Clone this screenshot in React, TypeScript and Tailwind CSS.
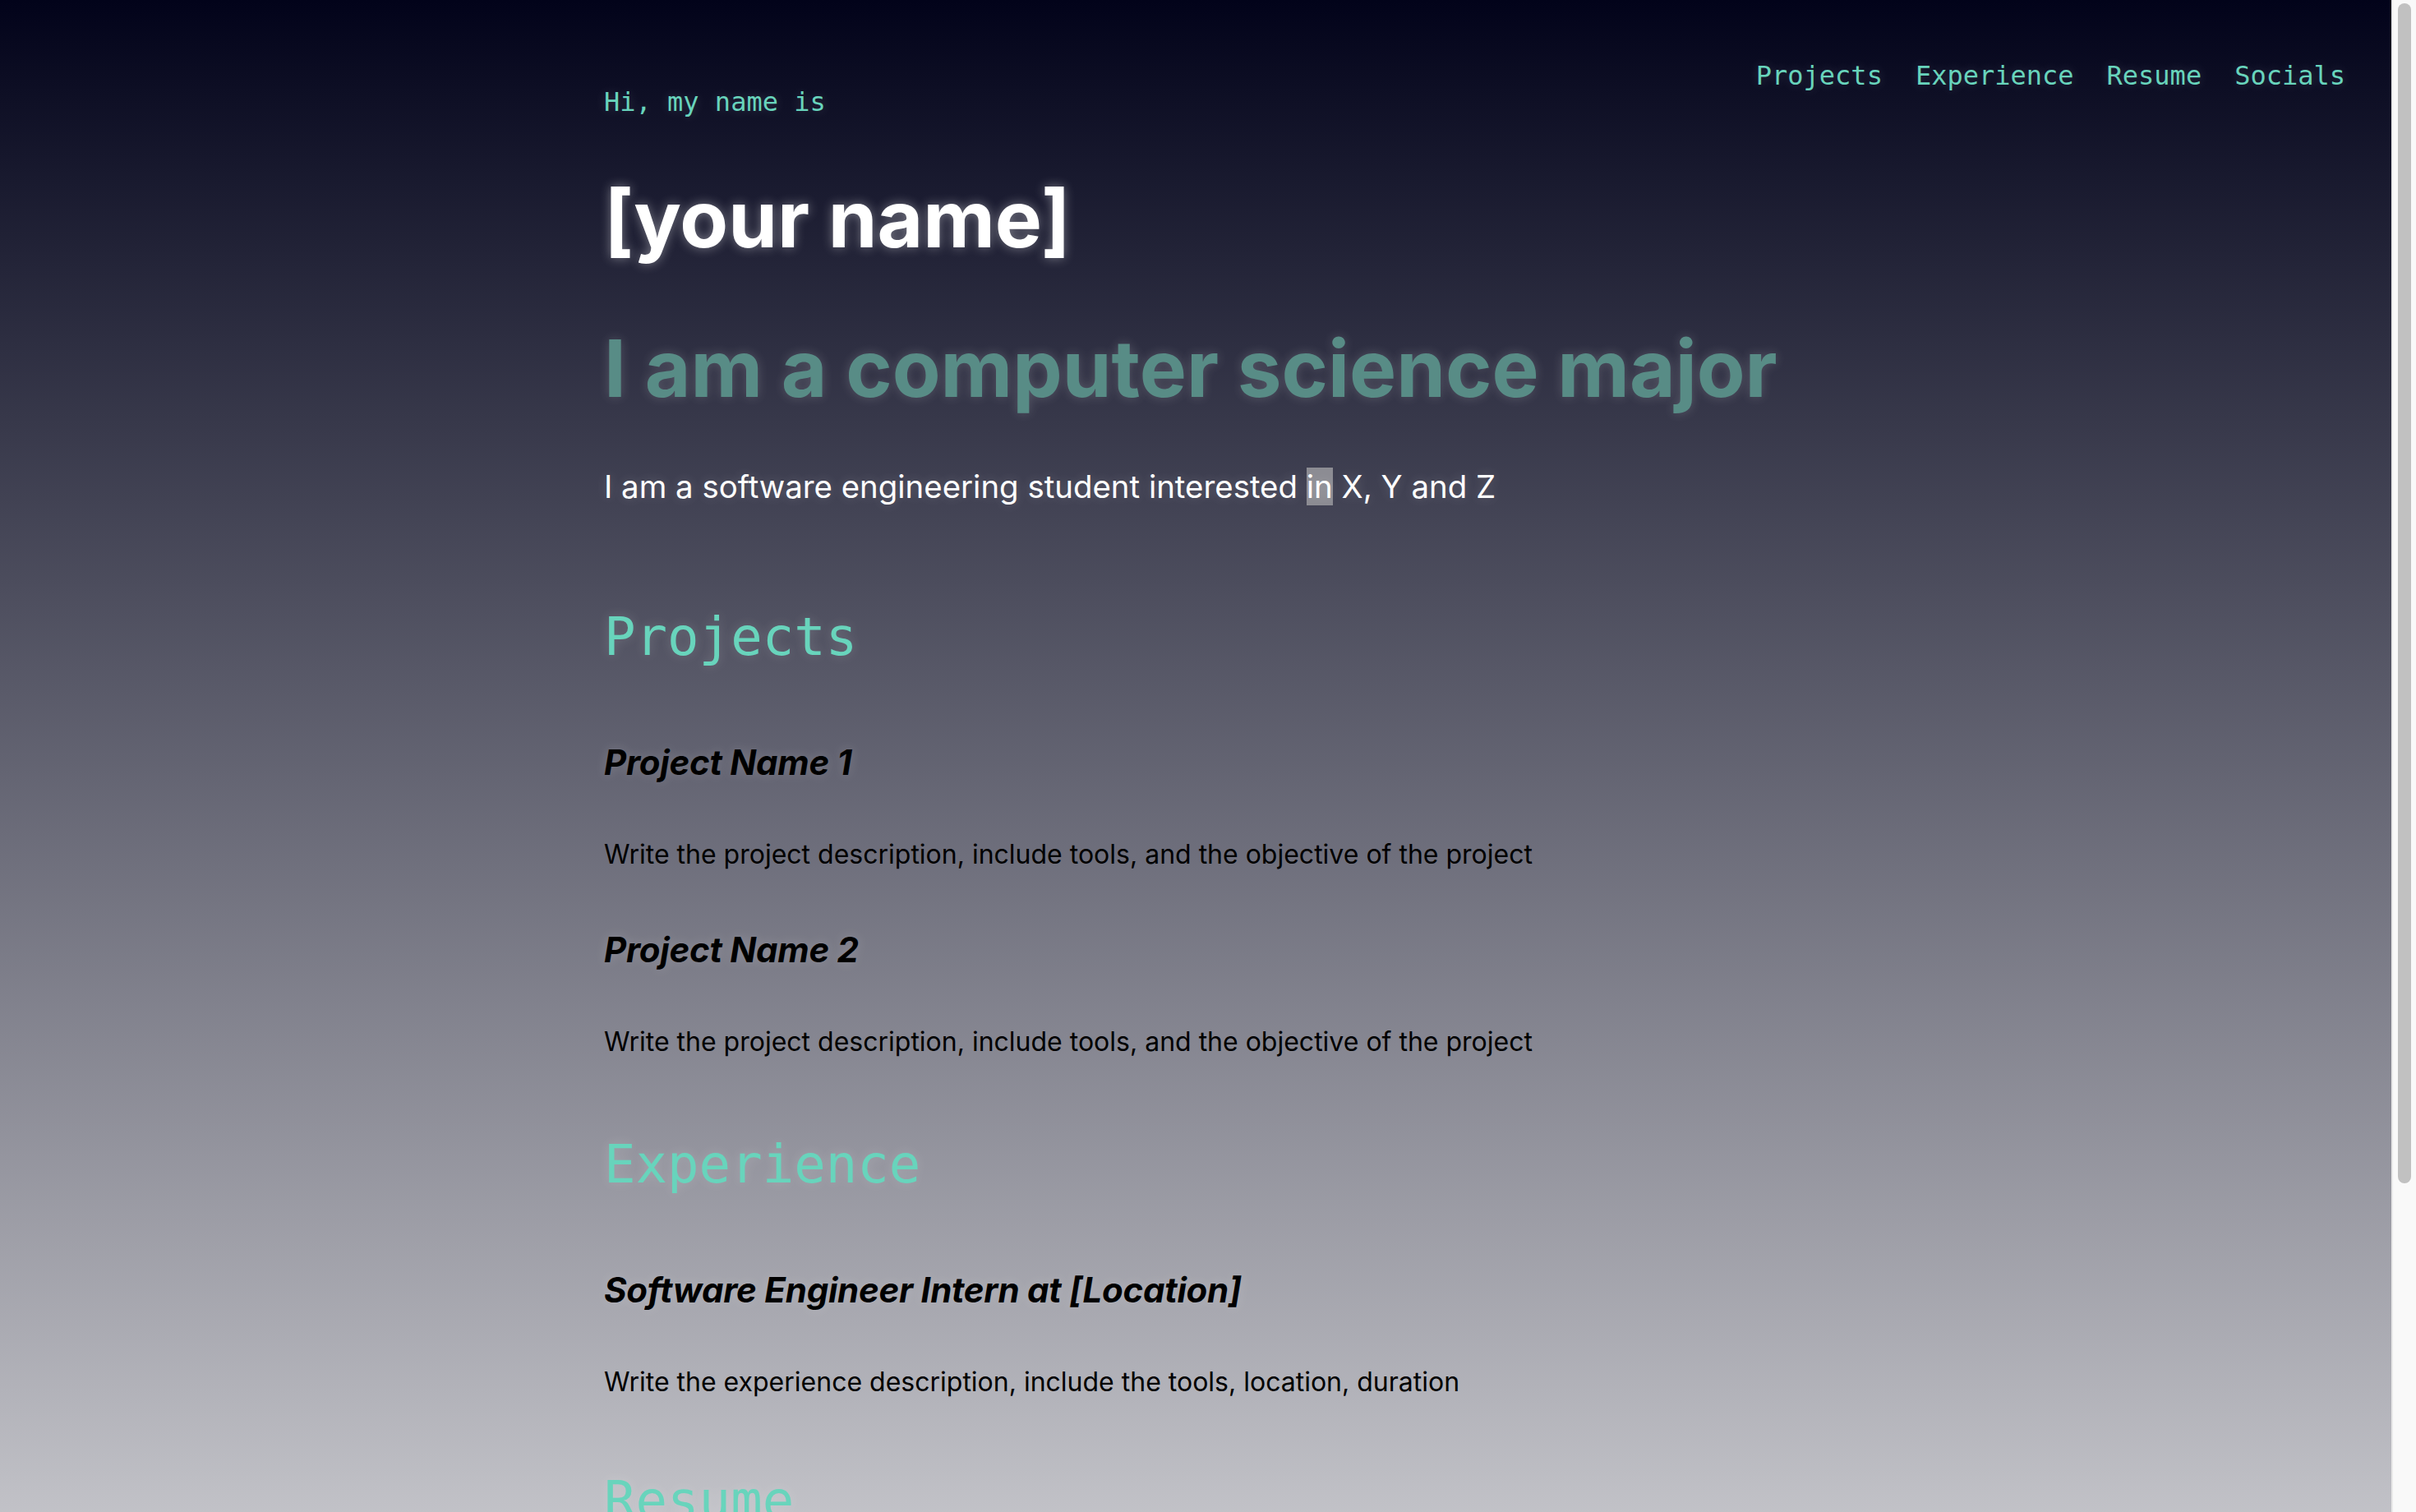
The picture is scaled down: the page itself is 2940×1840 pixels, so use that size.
import React from 'react';

const sans = "font-['Inter','Noto_Sans',sans-serif]";
const mono = "font-['DejaVu_Sans_Mono','Liberation_Mono',monospace]";
const glow = '[text-shadow:0_0_14px_rgba(255,255,255,0.18)]';

const NavLinks = ['Projects', 'Experience', 'Resume', 'Socials'];

const projects = [
  { title: 'Project Name 1', text: 'Write the project description, include tools, and the objective of the project' },
  { title: 'Project Name 2', text: 'Write the project description, include tools, and the objective of the project' },
];

const SectionTitle = ({ children }: { children: React.ReactNode }) => (
  <h2 className={`${mono} ${glow} text-[64px] leading-none text-[#68d4bc]`}>{children}</h2>
);

const Item = ({ title, text, first }: { title: string; text: string; first?: boolean }) => (
  <div className={first ? 'mt-[100px]' : 'mt-[79px]'}>
    <h3 className={`${sans} ${glow} text-[42px] leading-none font-bold italic text-black tracking-[-0.25px]`}>{title}</h3>
    <p className={`${sans} mt-[75px] text-[32px] leading-none text-black`}>{text}</p>
  </div>
);

// headless shots hide the real scrollbar, so the track is drawn beside the page
const ScrollTrack = () => (
  <aside className="w-[30px] shrink-0 border-l-2 border-[#e9e9e9] bg-[#f9f9f9] pt-[4px] pl-[6px] pr-[6px]">
    <div className="h-[1436px] w-[16px] rounded-full bg-[#c1c1c1]" />
  </aside>
);

export default function App() {
  return (
    <div className="flex h-screen overflow-hidden">
      <div className="flex-1 overflow-hidden">
        <div className="min-h-[2360px] bg-[linear-gradient(to_bottom,#02031a,#ffffff)]">
          <header className={`${mono} ${glow} flex justify-end gap-[40px] pt-[76px] pr-[56px] text-[32px] leading-none text-[#68d4bc]`}>
            {NavLinks.map((l) => (
              <a key={l} href={`#${l.toLowerCase()}`}>{l}</a>
            ))}
          </header>

          <main className="mx-auto w-[1440px] pb-[200px]">
            <p className={`${mono} ${glow} text-[32px] leading-none text-[#68d4bc]`}>Hi, my name is</p>
            <h1 className={`${sans} mt-[78px] text-[96px] leading-none font-bold text-white [text-shadow:0_0_14px_rgba(255,255,255,0.4)]`}>
              [your name]
            </h1>
            <h2 className={`${sans} ${glow} mt-[86px] text-[96px] leading-none font-bold text-[#588c86]`}>
              I am a computer science major
            </h2>
            <p className={`${sans} ${glow} mt-[77px] text-[38.4px] leading-none text-white`}>
              I am a software engineering student interested <span className="bg-[#8c8c93]">in</span> X, Y and Z
            </p>

            <section id="projects" className="mt-[132px]">
              <SectionTitle>Projects</SectionTitle>
              {projects.map((p, i) => (
                <Item key={p.title} title={p.title} text={p.text} first={i === 0} />
              ))}
            </section>

            <section id="experience" className="mt-[101px]">
              <SectionTitle>Experience</SectionTitle>
              <Item
                first
                title="Software Engineer Intern at [Location]"
                text="Write the experience description, include the tools, location, duration"
              />
            </section>

            <section id="resume" className="mt-[96px]">
              <SectionTitle>Resume</SectionTitle>
              <p className={`${sans} mt-[75px] text-[32px] leading-none text-black`}>Link to your resume</p>
            </section>

            <section id="socials" className="mt-[96px]">
              <SectionTitle>Socials</SectionTitle>
              <p className={`${sans} mt-[75px] text-[32px] leading-none text-black`}>GitHub · LinkedIn · Email</p>
            </section>
          </main>
        </div>
      </div>
      <ScrollTrack />
    </div>
  );
}
